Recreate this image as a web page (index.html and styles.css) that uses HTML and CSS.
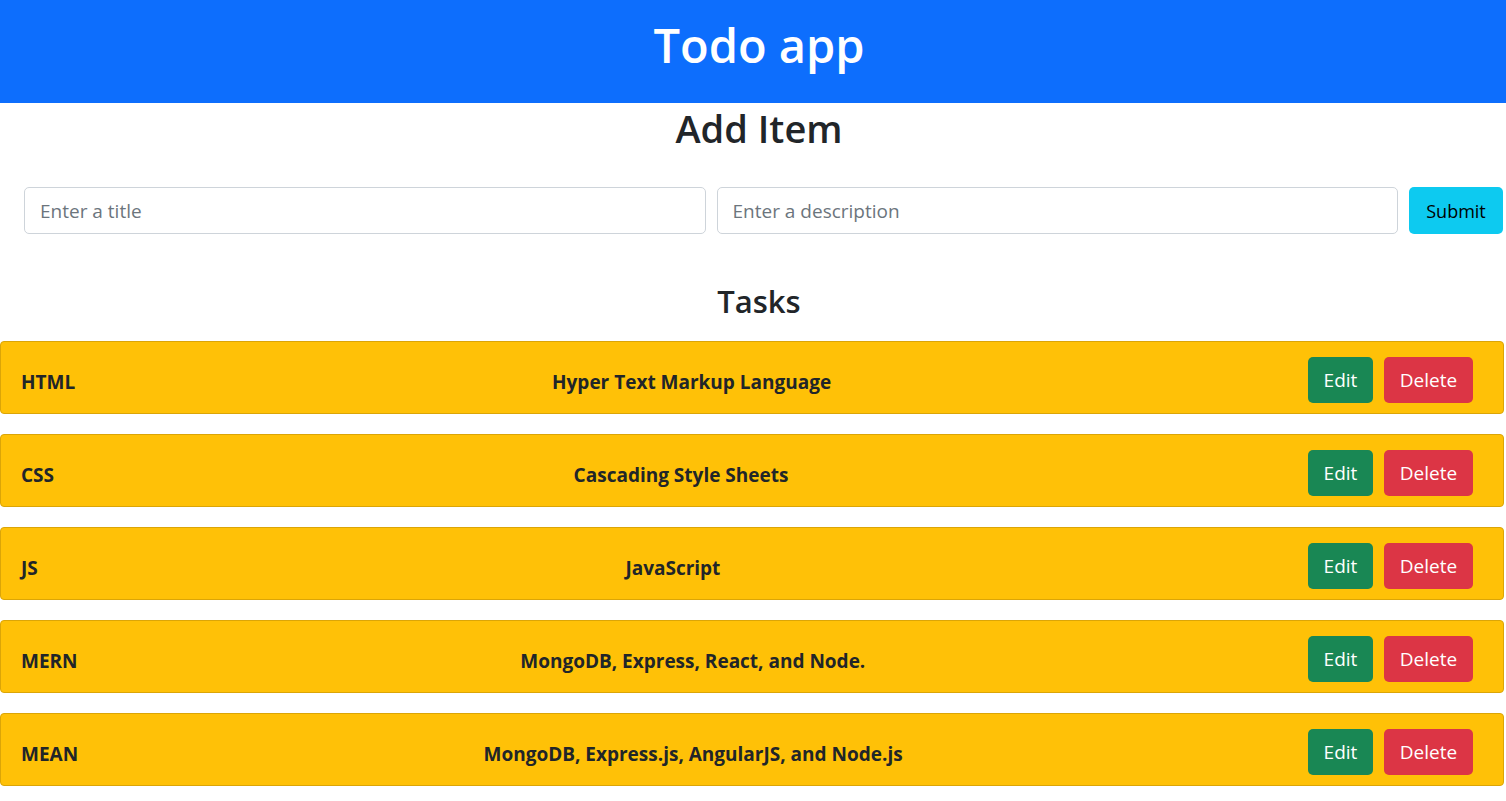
FILE: index.html
```html
<!DOCTYPE html>
<html>
<head>
<meta charset="utf-8">
<link rel="stylesheet" href="styles.css">
</head>
<body>
<header class="topbar"><h1 class="brand">Todo app</h1></header>
<main>
  <h2 class="section-title add-title">Add Item</h2>
  <form class="add-form">
    <input class="field" type="text" placeholder="Enter a title">
    <input class="field" type="text" placeholder="Enter a description">
    <button class="btn btn-info" type="button">Submit</button>
  </form>
  <h2 class="section-title tasks-title">Tasks</h2>
  <ul class="tasks">
    <li class="task"><span class="task-title">HTML</span><span class="task-desc">Hyper Text Markup Language</span><span class="task-actions"><button class="btn btn-edit">Edit</button><button class="btn btn-delete">Delete</button></span></li>
    <li class="task"><span class="task-title">CSS</span><span class="task-desc">Cascading Style Sheets</span><span class="task-actions"><button class="btn btn-edit">Edit</button><button class="btn btn-delete">Delete</button></span></li>
    <li class="task"><span class="task-title">JS</span><span class="task-desc">JavaScript</span><span class="task-actions"><button class="btn btn-edit">Edit</button><button class="btn btn-delete">Delete</button></span></li>
    <li class="task"><span class="task-title">MERN</span><span class="task-desc">MongoDB, Express, React, and Node.</span><span class="task-actions"><button class="btn btn-edit">Edit</button><button class="btn btn-delete">Delete</button></span></li>
    <li class="task"><span class="task-title">MEAN</span><span class="task-desc">MongoDB, Express.js, AngularJS, and Node.js</span><span class="task-actions"><button class="btn btn-edit">Edit</button><button class="btn btn-delete">Delete</button></span></li>
  </ul>
</main>
</body>
</html>
```
FILE: styles.css
```css
* { box-sizing: border-box; }
html, body { margin: 0; padding: 0; }
body {
  font-family: "Open Sans", "Noto Sans", sans-serif;
  color: #212529;
  background: #fff;
  overflow: hidden;
}
.topbar {
  background: #0d6efd;
  height: 103px;
  display: flex;
  align-items: center;
  justify-content: center;
  padding-left: 12px;
}
.brand {
  margin: 0 0 13px;
  color: #fff;
  font-size: 47px;
  font-weight: 600;
  line-height: 1;
}
.section-title {
  text-align: center;
  font-weight: 600;
  margin: 0;
  line-height: 1.2;
  padding-left: 12px;
}
.add-title {
  font-size: 38px;
  margin-top: 3px;
  height: 50px;
}
.add-form {
  display: flex;
  gap: 11px;
  margin: 31px 0 0 24px;
  width: 1479px;
}
.field {
  flex: 1;
  height: 47px;
  border: 1px solid #ced4da;
  border-radius: 5px;
  padding: 0 15px;
  font-family: inherit;
  font-size: 19px;
  color: #212529;
}
.field::placeholder { color: #6c757d; }
.btn {
  font-family: inherit;
  font-size: 18px;
  border: 0;
  border-radius: 5px;
  height: 47px;
  padding: 0 16px;
  cursor: pointer;
}
.btn-info { background: #0dcaf0; color: #000; width: 94px; flex: none; }
.tasks-title {
  font-size: 31px;
  margin-top: 49px;
}
.tasks {
  list-style: none;
  margin: 21px 0 0;
  padding: 0;
  width: 1504px;
  display: flex;
  flex-direction: column;
  gap: 20px;
}
.task {
  background: #ffc107;
  border: 1px solid #dba507;
  border-radius: 4px;
  height: 73px;
  display: flex;
  align-items: center;
  padding: 5px 30px 0 20px;
  font-weight: 700;
  font-size: 19px;
}
.task-title { flex: none; padding-top: 3px; }
.task-desc { flex: 1; text-align: center; padding-top: 3px; }
.task-actions { display: flex; gap: 11px; flex: none; }
.btn-edit { background: #198754; color: #fff; width: 65px; height: 46px; padding: 0; font-weight: 400; font-size: 19px; }
.btn-delete { background: #dc3545; color: #fff; width: 89px; height: 46px; padding: 0; font-weight: 400; font-size: 19px; }
```
